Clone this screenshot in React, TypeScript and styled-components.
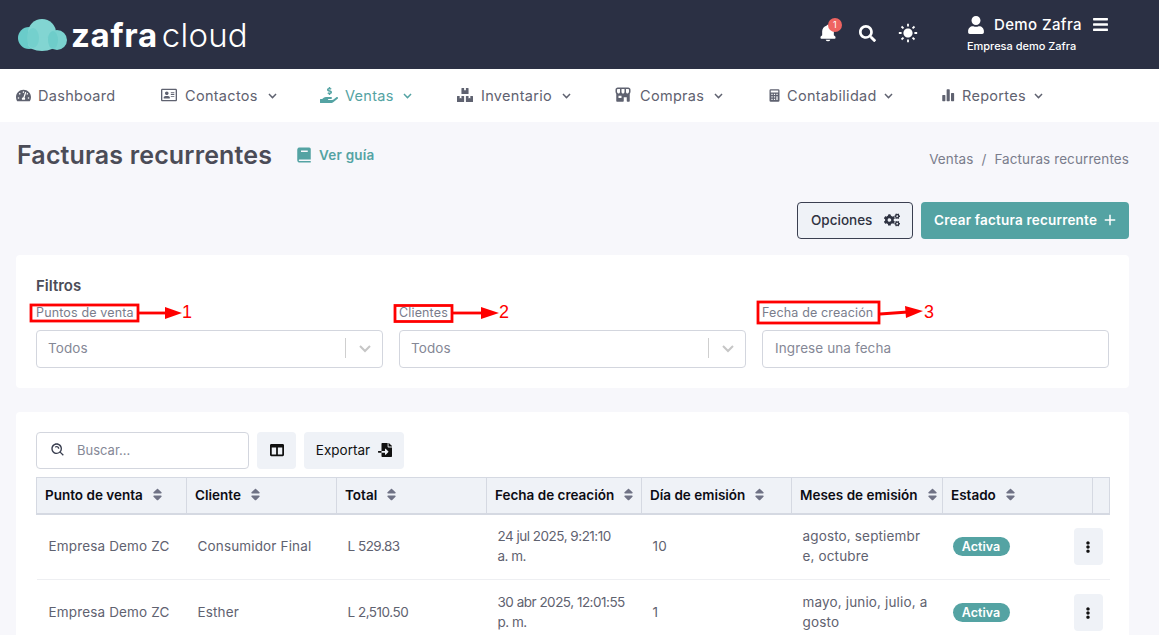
import React from 'react';
import styled, { createGlobalStyle } from 'styled-components';
import {
  BiChevronDown,
  BiPlus,
  BiSearchAlt,
  BiSolidBarChartAlt2,
  BiSolidBell,
  BiSolidBook,
  BiSolidCalculator,
  BiSolidStoreAlt,
  BiSolidSun,
} from 'react-icons/bi';
import {
  FaBars,
  FaBoxes,
  FaCogs,
  FaColumns,
  FaEllipsisV,
  FaFileImport,
  FaHandHoldingUsd,
  FaRegAddressCard,
  FaSearch,
  FaSort,
  FaTachometerAlt,
  FaUser,
} from 'react-icons/fa';

const TEAL = '#54a3a3';
const NAVY = '#2b3044';
const FONT = `Inter, "Open Sans", "Liberation Sans", sans-serif`;

const GlobalStyle = createGlobalStyle`
  html, body {
    margin: 0;
    overflow: hidden;
    background: #f7f7fb;
    font-family: ${FONT};
    font-size: 14px;
    color: #5f6270;
  }
  * { box-sizing: border-box; }
`;

/**
 *  HEADER
 */
const TopBar = styled.header`
  height: 69px;
  background: ${NAVY};
  display: flex;
  align-items: center;
  padding: 0 50px 0 18px;
  color: #fff;
`;

const Logo = styled.div`
  display: flex;
  align-items: center;
  flex: 1;
`;

const LogoBold = styled.span`
  font-size: 33px;
  font-weight: 700;
  letter-spacing: 0.7px;
  margin-left: 3px;
`;

const LogoLight = styled.span`
  font-size: 33px;
  font-weight: 300;
  letter-spacing: 0.2px;
  margin-left: 4px;
`;

const TopIcons = styled.div`
  display: flex;
  align-items: center;
  gap: 21px;
  margin-right: 48px;
  margin-top: -3px;
`;

const BellWrap = styled.div`
  position: relative;
  display: flex;
`;

const BellBadge = styled.span`
  position: absolute;
  top: -5px;
  right: -4px;
  width: 14px;
  height: 14px;
  border-radius: 50%;
  background: #ef6461;
  font-size: 9px;
  line-height: 14px;
  text-align: center;
`;

const UserBlock = styled.div`
  display: flex;
  flex-direction: column;
  gap: 5px;
  margin-top: -1px;
`;

const UserRow = styled.div`
  display: flex;
  align-items: center;
  font-size: 15px;
  font-weight: 500;
`;

const UserName = styled.span`
  margin: 0 10px 0 9px;
  letter-spacing: 0.4px;
`;

const UserCompany = styled.div`
  font-size: 11px;
  font-weight: 500;
`;

/**
 *  NAV
 */
const Nav = styled.nav`
  height: 53px;
  background: #fff;
  display: flex;
  align-items: center;
  padding: 0 0 1px 16px;
  margin-bottom: 11px;
`;

const NavItem = styled.div<{ $w: number; $gap: number; $active?: boolean }>`
  width: ${(p) => p.$w}px;
  flex: none;
  display: flex;
  align-items: center;
  gap: ${(p) => p.$gap}px;
  font-size: 14.5px;
  letter-spacing: 0.3px;
  color: ${(p) => (p.$active ? TEAL : '#5f6270')};
`;

const NavChevron = styled(BiChevronDown)`
  margin-left: -2px;
`;

/**
 *  TITLE + ACTIONS
 */
const TitleRow = styled.div`
  height: 44px;
  display: flex;
  align-items: center;
  padding: 0 30px 0 17px;
`;

const Title = styled.h1`
  margin: 0;
  font-size: 25px;
  font-weight: 600;
  color: #4b4c57;
  letter-spacing: 0.15px;
`;

const GuideLink = styled.a`
  display: flex;
  align-items: center;
  gap: 6px;
  margin-left: 23px;
  color: ${TEAL};
  font-size: 13.5px;
  font-weight: 600;
  letter-spacing: 0.2px;
`;

const Breadcrumb = styled.div`
  margin-left: auto;
  margin-top: 8px;
  display: flex;
  gap: 8px;
  font-size: 13.5px;
  letter-spacing: 0.1px;
  color: #7a7d8c;
`;

const Actions = styled.div`
  display: flex;
  justify-content: flex-end;
  gap: 8px;
  padding: 25px 30px 16px 0;
`;

const OptionsButton = styled.button`
  width: 116px;
  height: 37px;
  display: flex;
  align-items: center;
  justify-content: space-between;
  padding: 0 12px 2px 13px;
  border: 1px solid #3a3f50;
  border-radius: 4px;
  background: #eff2f7;
  color: #2f3342;
  font: 500 13.5px ${FONT};
`;

const CreateButton = styled.button`
  width: 208px;
  height: 37px;
  display: flex;
  align-items: center;
  justify-content: space-between;
  padding: 0 10px 2px 13px;
  border: none;
  border-radius: 4px;
  background: ${TEAL};
  color: #fff;
  font: 600 13.5px ${FONT};
  letter-spacing: 0.2px;
`;

/**
 *  FILTERS
 */
const Card = styled.section`
  position: relative;
  margin: 0 30px 24px 16px;
  padding: 20px;
  background: #fff;
  border-radius: 4px;
`;

const FilterTitle = styled.div`
  font-size: 15px;
  font-weight: 600;
  color: #4b4c57;
  line-height: 22px;
`;

const FilterGrid = styled.div`
  display: grid;
  grid-template-columns: repeat(3, 1fr);
  gap: 16px;
  margin-top: 7px;
`;

const Label = styled.div`
  font-size: 12.5px;
  line-height: 17px;
  letter-spacing: 0.15px;
  color: #7a7d8c;
  margin-bottom: 9px;
`;

const FieldBox = styled.div<{ $pad: number }>`
  height: 38px;
  display: flex;
  align-items: center;
  padding: 0 0 2px ${(p) => p.$pad}px;
  border: 1px solid #d3d6de;
  border-radius: 4px;
  font-size: 13.5px;
  letter-spacing: 0.1px;
  color: #858896;
`;

const FieldDivider = styled.span`
  margin-left: auto;
  width: 1px;
  height: 20px;
  background: #cfcfcf;
`;

const FieldChevron = styled(BiChevronDown)`
  margin: 0 5px 0 7px;
  color: #c6c6c6;
`;

const Annotations = styled.svg`
  position: absolute;
  left: 0;
  top: 0;
  pointer-events: none;
`;

/**
 *  TABLE
 */
const TableCard = styled(Card)`
  margin-bottom: 0;
  padding-bottom: 0;
`;

const Toolbar = styled.div`
  display: flex;
  gap: 8px;
  margin-bottom: 8px;
`;

const SearchBox = styled.div`
  width: 213px;
  height: 37px;
  display: flex;
  align-items: center;
  gap: 11px;
  padding: 0 0 2px 13px;
  border: 1px solid #d3d6de;
  border-radius: 4px;
  color: #3a3f50;
  font-size: 13px;
`;

const SearchText = styled.span`
  color: #858896;
`;

const ToolButton = styled.button<{ $w: number }>`
  width: ${(p) => p.$w}px;
  height: 37px;
  display: flex;
  align-items: center;
  justify-content: center;
  gap: 8px;
  padding: 0 0 2px;
  border: none;
  border-radius: 4px;
  background: #eff2f7;
  color: #111;
  font: 400 13.5px ${FONT};
`;

const Table = styled.table`
  width: 1073px;
  table-layout: fixed;
  border-collapse: collapse;
`;

const Th = styled.th<{ $w: number }>`
  width: ${(p) => p.$w}px;
  height: 36px;
  padding: 0 8px;
  background: #eff2f7;
  border: 1px solid #d5d9e2;
  border-width: 1px 1px 2px 1px;
  color: #0c0c14;
  font-size: 13.5px;
  font-weight: 600;
  text-align: left;
  white-space: nowrap;
`;

const SortIcon = styled(FaSort)`
  margin-left: 7px;
  color: #6f7285;
  vertical-align: -2px;
`;

const Tr = styled.tr`
  height: 66px;
  border-bottom: 1px solid #eeeff2;
`;

const Td = styled.td<{ $tight?: boolean }>`
  padding: 0 11px 2px;
  font-size: 13.5px;
  line-height: 20px;
  letter-spacing: ${(p) => (p.$tight ? '-0.5px' : '0.15px')};
  color: #5f6270;
  white-space: pre-line;

  &:first-child {
    padding-left: 12px;
  }
`;

const StatusCell = styled.div`
  display: flex;
  align-items: center;
  justify-content: space-between;
  margin: 2px -4px 0 -1px;
`;

const StatusBadge = styled.span`
  width: 57px;
  height: 19px;
  border-radius: 10px;
  background: ${TEAL};
  color: #fff;
  font-size: 12.5px;
  font-weight: 600;
  letter-spacing: 0;
  line-height: 19px;
  text-align: center;
`;

const RowButton = styled.button`
  width: 29px;
  height: 37px;
  display: flex;
  align-items: center;
  justify-content: center;
  padding: 0;
  border: none;
  border-radius: 4px;
  background: #eff2f7;
  color: #111;
`;

const NAV_ITEMS = [
  { label: 'Dashboard', w: 145, gap: 7, size: 15, Icon: FaTachometerAlt, chevron: false },
  { label: 'Contactos', w: 159, gap: 8, size: 16, Icon: FaRegAddressCard, chevron: true },
  { label: 'Ventas', w: 137, gap: 7, size: 18, Icon: FaHandHoldingUsd, chevron: true, active: true },
  { label: 'Inventario', w: 157, gap: 8, size: 16, Icon: FaBoxes, chevron: true },
  { label: 'Compras', w: 153, gap: 8, size: 18, Icon: BiSolidStoreAlt, chevron: true },
  { label: 'Contabilidad', w: 174, gap: 5, size: 15, Icon: BiSolidCalculator, chevron: true },
  { label: 'Reportes', w: 130, gap: 6, size: 15, Icon: BiSolidBarChartAlt2, chevron: true },
];

const COLUMNS = [
  { label: 'Punto de venta', w: 150 },
  { label: 'Cliente', w: 150 },
  { label: 'Total', w: 150 },
  { label: 'Fecha de creación', w: 155 },
  { label: 'Día de emisión', w: 150 },
  { label: 'Meses de emisión', w: 151 },
  { label: 'Estado', w: 150 },
  { label: '', w: 17 },
];

const ROWS = [
  {
    pos: 'Empresa Demo ZC',
    client: 'Consumidor Final',
    total: 'L 529.83',
    date: '24 jul 2025, 9:21:10\na. m.',
    day: '10',
    months: 'agosto, septiembr\ne, octubre',
  },
  {
    pos: 'Empresa Demo ZC',
    client: 'Esther',
    total: 'L 2,510.50',
    date: '30 abr 2025, 12:01:55\np. m.',
    day: '1',
    months: 'mayo, junio, julio, a\ngosto',
  },
];

const RED = '#ff0000';

const App = () => (
  <>
    <GlobalStyle />
    <TopBar>
      <Logo>
        <svg width="50" height="32" viewBox="0 0 50 32">
          <circle cx="11" cy="19" r="11" fill="#6accca" />
          <circle cx="24" cy="14" r="14" fill="#82d5d2" />
          <circle cx="39" cy="21" r="10" fill="#7ad2cf" />
          <ellipse cx="24" cy="25" rx="14" ry="7" fill="#82d5d2" />
          <ellipse cx="15" cy="19" rx="6" ry="10" fill="#74d0cd" />
          <ellipse cx="35" cy="21" rx="5" ry="9" fill="#6ecdca" />
        </svg>
        <LogoBold>zafra</LogoBold>
        <LogoLight>cloud</LogoLight>
      </Logo>
      <TopIcons>
        <BellWrap>
          <BiSolidBell size={20} />
          <BellBadge>1</BellBadge>
        </BellWrap>
        <FaSearch size={17} />
        <BiSolidSun size={22} />
      </TopIcons>
      <UserBlock>
        <UserRow>
          <FaUser size={18} />
          <UserName>Demo Zafra</UserName>
          <FaBars size={17} />
        </UserRow>
        <UserCompany>Empresa demo Zafra</UserCompany>
      </UserBlock>
    </TopBar>

    <Nav>
      {NAV_ITEMS.map(({ label, w, gap, size, Icon, chevron, active }) => (
        <NavItem key={label} $w={w} $gap={gap} $active={active}>
          <Icon size={size} />
          <span>{label}</span>
          {chevron && <NavChevron size={17} />}
        </NavItem>
      ))}
    </Nav>

    <TitleRow>
      <Title>Facturas recurrentes</Title>
      <GuideLink>
        <BiSolidBook size={18} />
        Ver guía
      </GuideLink>
      <Breadcrumb>
        <span>Ventas</span>
        <span>/</span>
        <span>Facturas recurrentes</span>
      </Breadcrumb>
    </TitleRow>

    <Actions>
      <OptionsButton>
        Opciones
        <FaCogs size={16} />
      </OptionsButton>
      <CreateButton>
        Crear factura recurrente
        <BiPlus size={18} />
      </CreateButton>
    </Actions>

    <Card>
      <FilterTitle>Filtros</FilterTitle>
      <FilterGrid>
        <div>
          <Label>Puntos de venta</Label>
          <FieldBox $pad={11}>
            Todos
            <FieldDivider />
            <FieldChevron size={24} />
          </FieldBox>
        </div>
        <div>
          <Label>Clientes</Label>
          <FieldBox $pad={11}>
            Todos
            <FieldDivider />
            <FieldChevron size={24} />
          </FieldBox>
        </div>
        <div>
          <Label>Fecha de creación</Label>
          <FieldBox $pad={12}>Ingrese una fecha</FieldBox>
        </div>
      </FilterGrid>
      <Annotations width="1113" height="133" viewBox="0 0 1113 133">
        <g fill="none" stroke={RED} strokeWidth="2.8">
          <rect x="15" y="50" width="107" height="16" />
          <rect x="379" y="50.5" width="57" height="16" />
          <rect x="742" y="47" width="121" height="21" />
          <path d="M123 58H150" />
          <path d="M437 58H466" />
          <path d="M864 59L892 57" />
        </g>
        <g fill={RED}>
          <path d="M149 52L166 58L149 64Z" />
          <path d="M465 52L483 58L465 64Z" />
          <path d="M889 51L907 56L890 63Z" />
        </g>
        <g fill={RED} fontFamily="Liberation Sans, sans-serif" fontSize="18">
          <text x="166" y="63">1</text>
          <text x="483" y="63">2</text>
          <text x="908" y="63">3</text>
        </g>
      </Annotations>
    </Card>

    <TableCard>
      <Toolbar>
        <SearchBox>
          <BiSearchAlt size={16} />
          <SearchText>Buscar...</SearchText>
        </SearchBox>
        <ToolButton $w={39}>
          <FaColumns size={14} />
        </ToolButton>
        <ToolButton $w={100}>
          Exportar
          <FaFileImport size={14} />
        </ToolButton>
      </Toolbar>
      <Table>
        <thead>
          <tr>
            {COLUMNS.map(({ label, w }) => (
              <Th key={label || 'actions'} $w={w}>
                {label}
                {label && <SortIcon size={15} />}
              </Th>
            ))}
          </tr>
        </thead>
        <tbody>
          {ROWS.map((row) => (
            <Tr key={row.client}>
              <Td>{row.pos}</Td>
              <Td>{row.client}</Td>
              <Td $tight>{row.total}</Td>
              <Td $tight>{row.date}</Td>
              <Td>{row.day}</Td>
              <Td>{row.months}</Td>
              <Td colSpan={2}>
                <StatusCell>
                  <StatusBadge>Activa</StatusBadge>
                  <RowButton>
                    <FaEllipsisV size={12} />
                  </RowButton>
                </StatusCell>
              </Td>
            </Tr>
          ))}
        </tbody>
      </Table>
    </TableCard>
  </>
);

export default App;
